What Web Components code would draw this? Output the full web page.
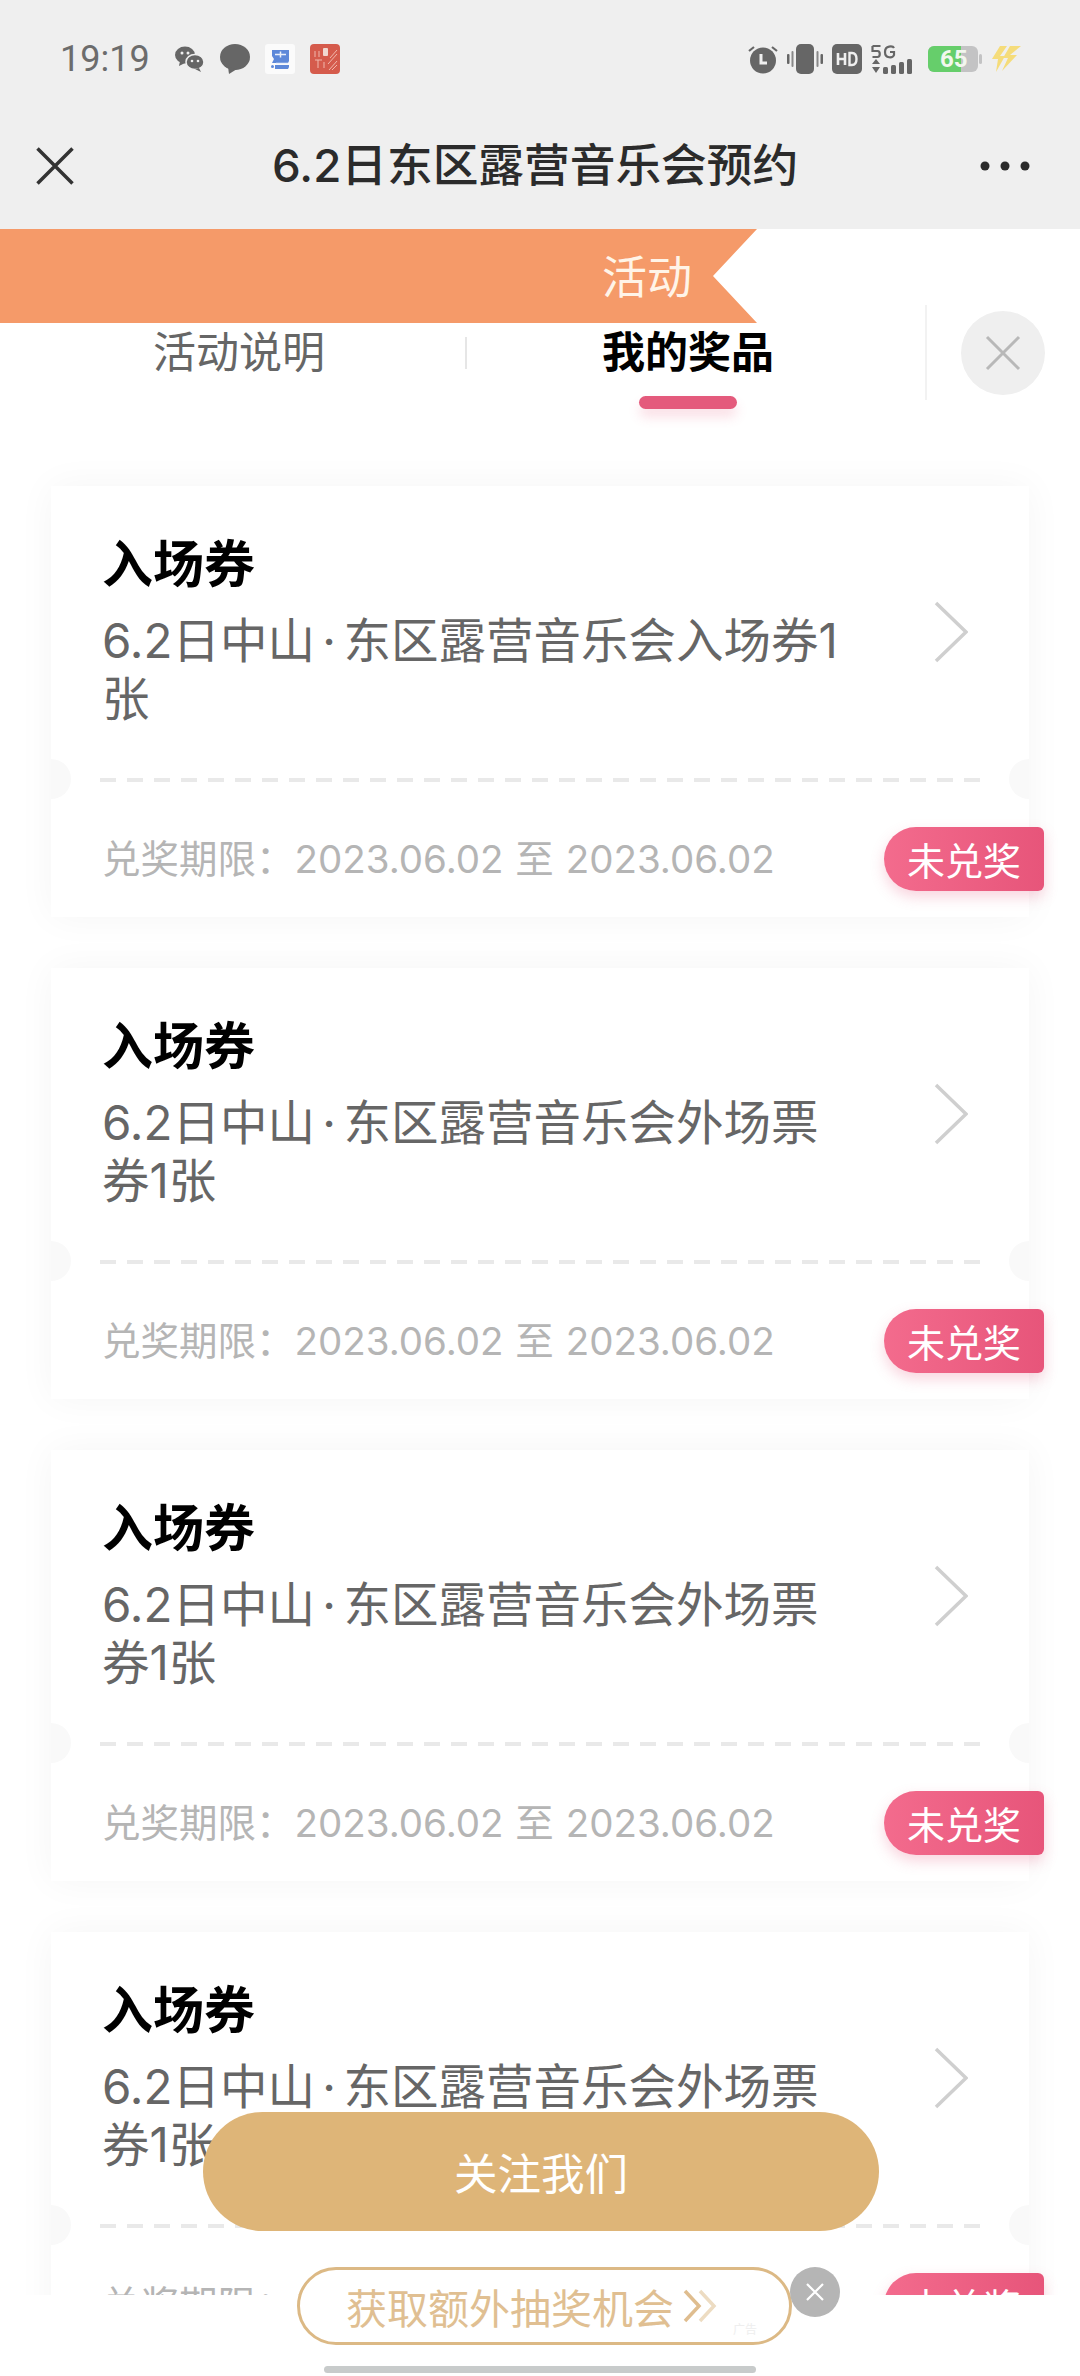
<!DOCTYPE html>
<html lang="zh">
<head>
<meta charset="utf-8">
<title>6.2日东区露营音乐会预约</title>
<style>
  html, body { margin: 0; padding: 0; background: #fff; }
  body { font-family: Inter, "Noto Sans CJK SC", sans-serif; }
  prize-page { width: 1080px; height: 2376px; }
</style>
</head>
<body>
<prize-page>
  <status-bar></status-bar>
  <nav-bar>6.2日东区露营音乐会预约</nav-bar>
  <promo-banner>活动</promo-banner>
  <prize-tabs></prize-tabs>
  <prize-card slot="list" name="入场券" date="2023.06.02 至 2023.06.02">6.2日中山 · 东区露营音乐会入场券1张</prize-card>
  <prize-card slot="list" name="入场券" date="2023.06.02 至 2023.06.02">6.2日中山 · 东区露营音乐会外场票券1张</prize-card>
  <prize-card slot="list" name="入场券" date="2023.06.02 至 2023.06.02">6.2日中山 · 东区露营音乐会外场票券1张</prize-card>
  <prize-card slot="list" name="入场券" date="2023.06.02 至 2023.06.02">6.2日中山 · 东区露营音乐会外场票券1张</prize-card>
  <float-actions slot="float"></float-actions>
</prize-page>

<script>
class PrizePage extends HTMLElement {
  constructor() {
    super();
    const shadowRoot = this.attachShadow({mode: 'open'});
    shadowRoot.innerHTML = `
      <style>
        :host { display: flex; flex-direction: column; position: relative; overflow: hidden; background: #fff; }
        #list { flex: 1; min-height: 0; overflow: hidden; padding-top: 86px; }
        #bottom { height: 81px; background: #fff; position: relative; flex: none; }
        #home { position: absolute; left: 324px; top: 71px; width: 432px; height: 7px; border-radius: 4px; background: #c8cbcb; }
      </style>
      <slot></slot>
      <div id="list"><slot name="list"></slot></div>
      <div id="bottom"><div id="home"></div></div>
      <slot name="float"></slot>
    `;
  }
}

class StatusBar extends HTMLElement {
  constructor() {
    super();
    const shadowRoot = this.attachShadow({mode: 'open'});
    shadowRoot.innerHTML = `
      <style>
        :host { display: flex; align-items: center; height: 117px; padding: 0 59px 0 60px; box-sizing: border-box; background: #efefef; }
        #time { font: 400 36px Roboto, sans-serif; color: #6c6c6c; width: 115px; }
        #left, #right { display: flex; align-items: center; }
        #left { gap: 15px; }
        #right { margin-left: auto; gap: 9px; }
        svg { display: block; }
      </style>
      <span id="time">19:19</span>
      <div id="left">
        <svg width="30" height="26" viewBox="0 0 30 26" fill="#666">
          <ellipse cx="10" cy="9" rx="10" ry="8.500"/><path d="M5 15l-1 5 6-3z"/>
          <ellipse cx="20" cy="16" rx="9" ry="7.500" stroke="#efefef" stroke-width="1.500"/><path d="M24 22l2 4-6-3z"/>
          <circle cx="7" cy="7" r="1.500" fill="#efefef"/><circle cx="13" cy="7" r="1.500" fill="#efefef"/>
          <circle cx="17" cy="15" r="1.300" fill="#efefef"/><circle cx="23" cy="15" r="1.300" fill="#efefef"/>
        </svg>
        <svg width="30" height="30" viewBox="0 0 30 30" fill="#666">
          <ellipse cx="15" cy="13" rx="15" ry="13"/><path d="M8 23l1 7 8-5z"/>
        </svg>
        <svg width="30" height="30" viewBox="0 0 30 30">
          <rect width="30" height="30" rx="3" fill="#fbfbfb"/>
          <path d="M7 6h17v11l-1 2h-16l2-4-2-3zM10 21h14v2l-1 2h-13z" fill="#5d88d9"/>
          <circle cx="7.500" cy="22.500" r="1.500" fill="#5d88d9"/>
          <path d="M10 10.500h11M15.500 7.500v6M11 19.500h12" stroke="#e9effa" stroke-width="1.500"/>
        </svg>
        <svg width="30" height="30" viewBox="0 0 30 30">
          <rect width="30" height="30" rx="4" fill="#d55b4c"/>
          <rect x="13" y="4" width="5" height="8" rx="1" fill="#f1d8d0"/>
          <path d="M5 7v6M9 7v6M5 16h7M8 16v8M14 18v6M19 26l8-9M22 26l5-5M20 14l7-8M18 20l9-10" stroke="#f0b8ac" stroke-width="1" fill="none"/>
        </svg>
      </div>
      <div id="right">
        <svg width="30" height="30" viewBox="0 0 30 30">
          <circle cx="15" cy="16.500" r="13" fill="#666"/>
          <path d="M1 7l5-4M29 7l-5-4" stroke="#666" stroke-width="2.200"/>
          <path d="M13 10v9h6" stroke="#efefef" stroke-width="3" fill="none"/>
        </svg>
        <svg width="36" height="30" viewBox="0 0 36 30" fill="#666">
          <rect x="9" y="0" width="18" height="30" rx="5"/>
          <rect x="0" y="10" width="2.500" height="10" rx="1"/><rect x="33.500" y="10" width="2.500" height="10" rx="1"/>
          <rect x="4.500" y="7" width="2" height="16" rx="1" fill="#888"/><rect x="29.500" y="7" width="2" height="16" rx="1" fill="#888"/>
        </svg>
        <svg width="30" height="30" viewBox="0 0 30 30">
          <rect width="30" height="30" rx="5" fill="#666"/>
          <path d="M6 9v12M13 9v12M6 15h7" stroke="#efefef" stroke-width="2.600" fill="none"/>
          <path d="M17.500 9v12h2.500c3 0 4.500-2 4.500-6s-1.500-6-4.500-6z" stroke="#efefef" stroke-width="2.400" fill="none"/>
        </svg>
        <svg width="48" height="30" viewBox="0 0 48 30" fill="#666">
          <path d="M1.500 2h8M1.500 2v5h5c3 0 3 6 0 6h-5" stroke="#666" stroke-width="2.200" fill="none"/>
          <path d="M23 4c-1-2-9-3-9 4s8 6 9 3v-3h-4" stroke="#666" stroke-width="2.200" fill="none"/>
          <path d="M1 20l4-5 4 5zM1 23h8l-4 6z"/>
          <rect x="12" y="23" width="5" height="7" rx="1.500"/><rect x="20" y="21" width="5" height="9" rx="1.500"/>
          <rect x="28" y="18" width="5" height="12" rx="1.500"/><rect x="36" y="15" width="5" height="15" rx="1.500"/>
        </svg>
        <div style="position:relative;width:54px;height:26px">
          <svg width="54" height="26" viewBox="0 0 54 26" style="position:absolute;left:0;top:0">
            <rect width="50" height="26" rx="6" fill="#c3c3c4"/>
            <path d="M6 0h27v26h-27a6 6 0 0 1-6-6v-14a6 6 0 0 1 6-6z" fill="#66ce6b"/>
            <rect x="51" y="8" width="3" height="10" rx="1.500" fill="#c3c3c4"/>
          </svg>
          <span style="position:absolute;left:12px;top:0;font:700 24px/27px Roboto,sans-serif;color:#f2f7ee">65</span>
        </div>
        <svg width="30" height="26" viewBox="0 0 30 26">
          <path d="M9 0h7l-7 10h5l-9 16 2-13h-6zM19 0h11l-11 9h7l-15 16 6-13h-5z" fill="#f5dc7a"/>
        </svg>
      </div>
    `;
  }
}

class NavBar extends HTMLElement {
  constructor() {
    super();
    const shadowRoot = this.attachShadow({mode: 'open'});
    shadowRoot.innerHTML = `
      <style>
        :host { display: grid; grid-template-columns: 236px 1fr 50px; align-items: center; height: 112px; padding: 0 50px 14px 36px; box-sizing: border-box; background: #efefef; color: #2b2b2b; }
        #title { font: 500 45.700px/60px Inter, "Noto Sans CJK SC", sans-serif; white-space: nowrap; }
        svg { display: block; }
      </style>
      <svg width="38" height="38" viewBox="0 0 38 38"><path d="M1.500 1.500l35 35M36.500 1.500l-35 35" stroke="#333" stroke-width="3.500"/></svg>
      <span id="title"><slot></slot></span>
      <svg width="50" height="10" viewBox="0 0 50 10" fill="#2b2b2b"><circle cx="5" cy="5" r="4.500"/><circle cx="25" cy="5" r="4.500"/><circle cx="45" cy="5" r="4.500"/></svg>
    `;
  }
}

class PromoBanner extends HTMLElement {
  constructor() {
    super();
    const shadowRoot = this.attachShadow({mode: 'open'});
    shadowRoot.innerHTML = `
      <style>
        :host { display: flex; justify-content: flex-end; align-items: center; width: 757px; height: 94px; padding: 0 65px 3px 0; box-sizing: border-box;
          background: #f59a69; color: #fff4e8; font: 45px "Noto Sans CJK SC", sans-serif; position: relative; z-index: 1;
          clip-path: polygon(0 0, 100% 0, 713px 47px, 100% 100%, 0 100%); }
      </style>
      <slot></slot>
    `;
  }
}

class PrizeTabs extends HTMLElement {
  constructor() {
    super();
    const shadowRoot = this.attachShadow({mode: 'open'});
    shadowRoot.innerHTML = `
      <style>
        :host { display: flex; align-items: center; height: 95px; margin-top: -18px; font: 43px/50px "Noto Sans CJK SC", sans-serif; }
        #first { margin: 0 0 8px 153px; color: #666; }
        #sep1 { width: 2px; height: 32px; background: #e6e6e6; margin-left: 140px; }
        #second { margin: 0 0 8px 135px; color: #000; font-weight: 700; position: relative; }
        #second::after { content: ""; position: absolute; left: 37px; top: 72px; width: 98px; height: 13px; border-radius: 7px; background: #e45a7c; box-shadow: 0 8px 12px rgba(228,90,124,.2); }
        #sep2 { width: 2px; height: 95px; background: #f2f2f2; margin-left: 151px; }
        #close { width: 84px; height: 84px; border-radius: 50%; background: #efefef; margin-left: 34px; display: flex; align-items: center; justify-content: center; }
        svg { display: block; }
      </style>
      <span id="first">活动说明</span>
      <div id="sep1"></div>
      <span id="second">我的奖品</span>
      <div id="sep2"></div>
      <div id="close"><svg width="36" height="36" viewBox="0 0 36 36"><path d="M2 2l32 32M34 2l-32 32" stroke="#b8b8b8" stroke-width="3"/></svg></div>
    `;
  }
}

class PrizeCard extends HTMLElement {
  constructor() {
    super();
    const shadowRoot = this.attachShadow({mode: 'open'});
    shadowRoot.innerHTML = `
      <style>
        :host { display: block; position: relative; margin: 0 51px 51px; background: #fff; box-shadow: 0 0 36px rgba(0,0,0,.045); font-family: Inter, "Noto Sans CJK SC", sans-serif; }
        #body { display: flex; justify-content: space-between; height: 292px; padding: 45px 61px 0 51px; box-sizing: border-box; }
        #name { font: 700 51px/60px "Noto Sans CJK SC", sans-serif; color: #000; margin-bottom: 21px; }
        #desc { font-size: 47.500px; line-height: 58px; color: #666; width: 750px; word-spacing: -6px; }
        #dash { height: 4px; margin: 0 49px; background: repeating-linear-gradient(90deg, #e9e9e9 0 16px, transparent 16px 27px); }
        #foot { display: flex; align-items: center; justify-content: space-between; height: 135px; padding: 18px 0 0 51px; box-sizing: border-box; margin-right: -15px; }
        #date { font-size: 38.500px; color: #b5b5b5; white-space: nowrap; margin-bottom: 5px; word-spacing: 1px; }
        #badge { width: 160px; height: 64px; border-radius: 32px 6px 6px 32px; background: linear-gradient(90deg, #f36b8d, #e7557a); box-shadow: 0 6px 14px rgba(231,85,122,.25); color: #fff; font: 38px/64px "Noto Sans CJK SC", sans-serif; text-align: center; flex: none; }
        .notch { position: absolute; top: 273px; width: 20px; height: 40px; background: #f9f9f9; }
        #nl { left: 0; border-radius: 0 20px 20px 0; }
        #nr { right: 0; border-radius: 20px 0 0 20px; }
        svg { display: block; flex: none; align-self: center; margin-top: -45px; }
      </style>
      <div id="body">
        <div id="text">
          <div id="name"></div>
          <div id="desc"><slot></slot></div>
        </div>
        <svg width="34" height="62" viewBox="0 0 34 62"><path d="M2 2l30 29-30 29" fill="none" stroke="#cfcfcf" stroke-width="3.500"/></svg>
      </div>
      <div id="dash"></div>
      <div class="notch" id="nl"></div>
      <div class="notch" id="nr"></div>
      <div id="foot">
        <span id="date"></span>
        <span id="badge">未兑奖</span>
      </div>
    `;
    shadowRoot.querySelector('#name').textContent = this.getAttribute('name');
    shadowRoot.querySelector('#date').textContent = '兑奖期限：' + this.getAttribute('date');
  }
}

// the two buttons that float over the bottom of the list
class FloatActions extends HTMLElement {
  constructor() {
    super();
    const shadowRoot = this.attachShadow({mode: 'open'});
    shadowRoot.innerHTML = `
      <style>
        :host { position: absolute; left: 0; top: 2112px; width: 1080px; height: 240px; font-family: "Noto Sans CJK SC", sans-serif; z-index: 2; }
        #follow { position: absolute; left: 203px; top: 0; width: 676px; height: 119px; border-radius: 60px; background: #deb578; color: #fff; font-size: 43.500px; display: flex; align-items: center; justify-content: center; }
        #extra { position: absolute; left: 297px; top: 155px; width: 495px; height: 78px; box-sizing: border-box; border: 3px solid #dcb985; border-radius: 39px; background: #fff; color: #e0bf92; font-size: 41px; display: flex; align-items: center; padding-left: 46px; white-space: nowrap; }
        #extra svg { margin-left: 8px; display: block; }
        #ad { position: absolute; left: 433px; top: 50px; font-size: 12px; color: #eee; }
        #shut { position: absolute; left: 790px; top: 155px; width: 50px; height: 50px; border-radius: 50%; background: #b5b5b5; display: flex; align-items: center; justify-content: center; }
      </style>
      <div id="follow">关注我们</div>
      <div id="extra">获取额外抽奖机会<svg width="36" height="36" viewBox="0 0 36 36" fill="none"><path d="M3 3l14 15-14 15" stroke="#dfbd8f" stroke-width="3.500"/><path d="M18 3l14 15-14 15" stroke="#eddcc2" stroke-width="3.500"/></svg><span id="ad">广告</span></div>
      <div id="shut"><svg width="20" height="20" viewBox="0 0 20 20"><path d="M2 2l16 16M18 2l-16 16" stroke="#fff" stroke-width="2.200"/></svg></div>
    `;
  }
}

customElements.define('prize-page', PrizePage);
customElements.define('status-bar', StatusBar);
customElements.define('nav-bar', NavBar);
customElements.define('promo-banner', PromoBanner);
customElements.define('prize-tabs', PrizeTabs);
customElements.define('prize-card', PrizeCard);
customElements.define('float-actions', FloatActions);
</script>
</body>
</html>
